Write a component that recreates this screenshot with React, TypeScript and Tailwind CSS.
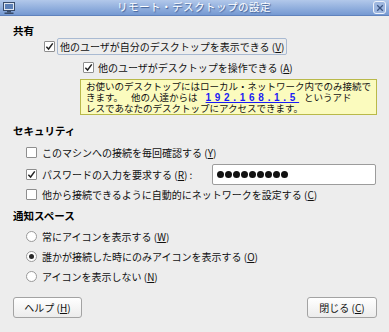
import React from "react"

const jp = { fontFamily: '"Noto Sans CJK JP", "Noto Sans", sans-serif' }

const Check = ({ checked }: { checked: boolean }) => (
  <span className="inline-flex w-[11px] h-[11px] shrink-0 items-center justify-center border border-[#8e8e8e] bg-white rounded-[1px]">
    {checked && (
      <svg viewBox="0 0 10 10" className="w-[9px] h-[9px]">
        <path d="M1.5 5.2 L4 7.8 L8.6 1.6" fill="none" stroke="#222" strokeWidth="1.6" />
      </svg>
    )}
  </span>
)

const Radio = ({ checked }: { checked: boolean }) => (
  <span className="inline-flex w-[11px] h-[11px] shrink-0 items-center justify-center rounded-full border border-[#9a9a9a] bg-white">
    {checked && <span className="w-[5px] h-[5px] rounded-full bg-[#2a2a2a]" />}
  </span>
)

const U = ({ c }: { c: string }) => <span className="underline underline-offset-1">{c}</span>

const Heading = ({ children, className = "" }: { children: React.ReactNode; className?: string }) => (
  <div className={`h-[14px] pl-[13px] flex items-center text-[10.5px] font-bold text-black ${className}`}>{children}</div>
)

export default function App() {
  return (
    <div className="w-[389px] h-[332px] bg-[#ededed] overflow-hidden text-[#111]" style={jp}>
      {/* title bar */}
      <div className="h-[16px] bg-linear-to-b from-[#b2c8ea] to-[#7599d2] border-b border-[#5f82bd] flex items-center px-[3px]">
        <svg viewBox="0 0 12 12" className="w-[12px] h-[12px] shrink-0">
          <rect x="0.5" y="0.5" width="11" height="8" fill="#dfe6f0" stroke="#394c6b" />
          <rect x="2" y="2" width="8" height="5" fill="#5c7fb6" />
          <rect x="4" y="9" width="4" height="1.5" fill="#394c6b" />
          <rect x="1.5" y="10.5" width="9" height="1.5" fill="#394c6b" />
        </svg>
        <div className="flex-1 text-center text-white text-[10.5px] leading-none [text-shadow:1px_1px_1px_#3f5f94] tracking-[0.5px]">
          リモート・デスクトップの設定
        </div>
        <span className="w-[13px] h-[13px] rounded-[3px] border border-[#eef3fb] bg-[#9db6df] flex items-center justify-center">
          <svg viewBox="0 0 10 10" className="w-[8px] h-[8px]">
            <path d="M1.5 1.5 L8.5 8.5 M8.5 1.5 L1.5 8.5" stroke="#3a5482" strokeWidth="1.6" />
          </svg>
        </span>
      </div>

      <Heading className="mt-[8px]">共有</Heading>

      <div className="h-[17px] flex items-center text-[10px] pl-[44px]">
        <Check checked />
        <span className="ml-[2px] h-[17px] px-[2px] flex items-center border border-[#a9bad2] rounded-[2px] whitespace-nowrap">
          他のユーザが自分のデスクトップを表示できる (<U c="V" />)
        </span>
      </div>

      <div className="mt-[4px] h-[17px] flex items-center text-[10px] pl-[83px] whitespace-nowrap">
        <Check checked />
        <span className="ml-[4px]">
          他のユーザがデスクトップを操作できる (<U c="A" />)
        </span>
      </div>

      <div className="mt-[3px] ml-[80px] w-[297px] h-[36px] bg-[#fbfbbe] border border-[#b9b94a] pl-[5px] pt-[1px] text-[9.5px] leading-[11px] whitespace-nowrap">
        <div className="h-[11px]">お使いのデスクトップにはローカル・ネットワーク内でのみ接続で</div>
        <div className="h-[11px] flex items-center">
          <span>きます。</span>
          <span className="ml-[8px]">他の人達からは</span>
          <span
            className="ml-[8px] text-[#1b1bf5] font-bold underline tracking-[3.7px] text-[10px] leading-[11px]"
            style={{ fontFamily: '"Liberation Sans", sans-serif' }}
          >
            192.168.1.5
          </span>
          <span className="ml-[5px]">というアド</span>
        </div>
        <div className="h-[11px]">レスであなたのデスクトップにアクセスできます。</div>
      </div>

      <Heading className="mt-[9px]">セキュリティ</Heading>

      <div className="mt-[6px] h-[16px] flex items-center pl-[26px] text-[10px] whitespace-nowrap">
        <Check checked={false} />
        <span className="ml-[5px]">
          このマシンへの接続を毎回確認する (<U c="Y" />)
        </span>
      </div>

      <div className="mt-[3px] h-[22px] flex items-center pl-[26px] text-[10px] whitespace-nowrap">
        <Check checked />
        <span className="ml-[5px] w-[164px]">
          パスワードの入力を要求する (<U c="R" />) :
        </span>
        <div className="ml-[6px] w-[164px] h-[21px] bg-white border border-[#9c9c9c] rounded-[2px] flex items-center pl-[4px] gap-[1px]">
          {Array.from({ length: 9 }, (_, i) => (
            <span key={i} className="w-[7px] h-[7px] rounded-full bg-[#111]" />
          ))}
        </div>
      </div>

      <div className="mt-[1px] h-[16px] flex items-center pl-[26px] text-[10px] whitespace-nowrap">
        <Check checked={false} />
        <span className="ml-[5px]">
          他から接続できるように自動的にネットワークを設定する (<U c="C" />)
        </span>
      </div>

      <Heading className="mt-[7px]">通知スペース</Heading>

      {[
        { label: "常にアイコンを表示する", key: "W", on: false },
        { label: "誰かが接続した時にのみアイコンを表示する", key: "O", on: true },
        { label: "アイコンを表示しない", key: "N", on: false },
      ].map((r, i) => (
        <div
          key={r.key}
          className={`${i === 0 ? "mt-[5px]" : "mt-[4px]"} h-[16px] flex items-center pl-[26px] text-[10px] whitespace-nowrap`}
        >
          <Radio checked={r.on} />
          <span className="ml-[5px]">
            {r.label} (<U c={r.key} />)
          </span>
        </div>
      ))}

      <div className="mt-[13px] flex justify-between pl-[13px] pr-[12px]">
        <button className="w-[69px] h-[21px] rounded-[3px] border border-[#a3a3a3] bg-linear-to-b from-white to-[#ececec] text-[10px] flex items-center justify-center">
          ヘルプ (<U c="H" />)
        </button>
        <button className="w-[70px] h-[21px] rounded-[3px] border border-[#a3a3a3] bg-linear-to-b from-white to-[#ececec] text-[10px] flex items-center justify-center">
          閉じる (<U c="C" />)
        </button>
      </div>
    </div>
  )
}
